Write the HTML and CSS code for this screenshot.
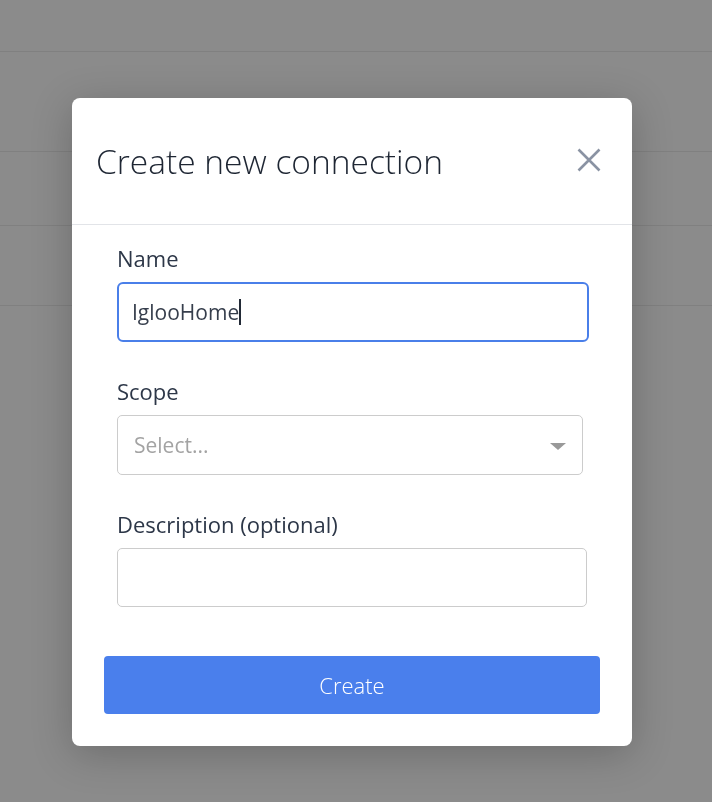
FILE: index.html
```html
<!DOCTYPE html>
<html lang="en">
<head>
    <meta charset="UTF-8">
    <title>Create new connection</title>
    <link rel="stylesheet" href="styles.css">
</head>
<body>

    <div class="page">
        <div class="row row-top"></div>
        <div class="row row-a"></div>
        <div class="row row-b"></div>
        <div class="row row-c"></div>
    </div>

    <div class="overlay">
        <div class="modal">
            <div class="modal-header">
                <h2 class="modal-title">Create new connection</h2>
                <button class="close" aria-label="Close">
                    <svg width="24" height="24" viewBox="0 0 24 24">
                        <path d="M1.5 1.5 L22.5 22.5 M22.5 1.5 L1.5 22.5" stroke="#8a93a3" stroke-width="2.6" fill="none"/>
                    </svg>
                </button>
            </div>

            <div class="modal-body">
                <div class="fields">
                    <label class="label">Name</label>
                    <div class="input focused"><span class="value">IglooHome</span><span class="caret"></span></div>

                    <label class="label">Scope</label>
                    <div class="input select">
                        <span class="placeholder">Select...</span>
                        <span class="arrow"></span>
                    </div>

                    <label class="label">Description (optional)</label>
                    <div class="input textarea"></div>
                </div>

                <button class="create">Create</button>
            </div>
        </div>
    </div>

</body>
</html>
```

FILE: styles.css
```css
body {
    margin: 0;
    background-color: #8b8b8b;
    font-family: "Open Sans", Arial, sans-serif;
}

.page {
    height: 802px;
}

.row {
    border-bottom: 1px solid #808080;
}

.row-top {
    height: 51px;
}

.row-a {
    height: 99px;
}

.row-b {
    height: 73px;
}

.row-c {
    height: 79px;
}

.overlay {
    position: fixed;
    top: 0;
    left: 0;
    right: 0;
    bottom: 0;
    display: flex;
    align-items: flex-start;
    padding: 98px 0 0 72px;
}

.modal {
    width: 560px;
    background-color: #ffffff;
    border-radius: 8px;
    box-shadow: 0 8px 40px rgba(0, 0, 0, 0.22);
}

.modal-header {
    height: 126px;
    display: flex;
    align-items: center;
    justify-content: space-between;
    padding: 0 31px 0 24px;
    border-bottom: 1px solid #e2e4e8;
}

.modal-title {
    margin: 0;
    font-size: 33.5px;
    font-weight: 300;
    color: #1e2633;
    line-height: 1.4;
}

.close {
    border: none;
    background: none;
    padding: 0;
    width: 24px;
    height: 24px;
    margin-top: -2px;
    cursor: pointer;
}

.modal-body {
    padding: 17px 32px 32px 32px;
}

.fields {
    display: flex;
    flex-direction: column;
    padding: 0 11px 0 13px;
}

.label {
    font-size: 22px;
    line-height: 33px;
    color: #2d3748;
    margin-bottom: 7px;
}

.input {
    box-sizing: border-box;
    height: 60px;
    border: 1px solid #cccccc;
    border-radius: 5px;
    margin-bottom: 33px;
    display: flex;
    align-items: center;
    font-size: 21px;
}

.focused {
    border: 2px solid #4a7fe9;
    border-radius: 6px;
    padding-left: 13px;
    color: #363e4c;
}

.caret {
    display: inline-block;
    width: 2px;
    height: 26px;
    background-color: #222a36;
    margin-left: 0;
}

.select {
    margin-right: 6px;
    justify-content: space-between;
    padding: 0 16px 0 16px;
}

.placeholder {
    color: #a3a3a3;
}

.arrow {
    width: 0;
    height: 0;
    border-left: 8px solid transparent;
    border-right: 8px solid transparent;
    border-top: 7px solid #999999;
    margin-top: 2px;
}

.textarea {
    margin-right: 2px;
    height: 59px;
    margin-bottom: 49px;
}

.create {
    display: block;
    width: 100%;
    height: 58px;
    border: none;
    border-radius: 4px;
    background-color: #4a7fec;
    color: #ffffff;
    font-family: "Open Sans", Arial, sans-serif;
    font-size: 22px;
    font-weight: 300;
    cursor: pointer;
}
```
